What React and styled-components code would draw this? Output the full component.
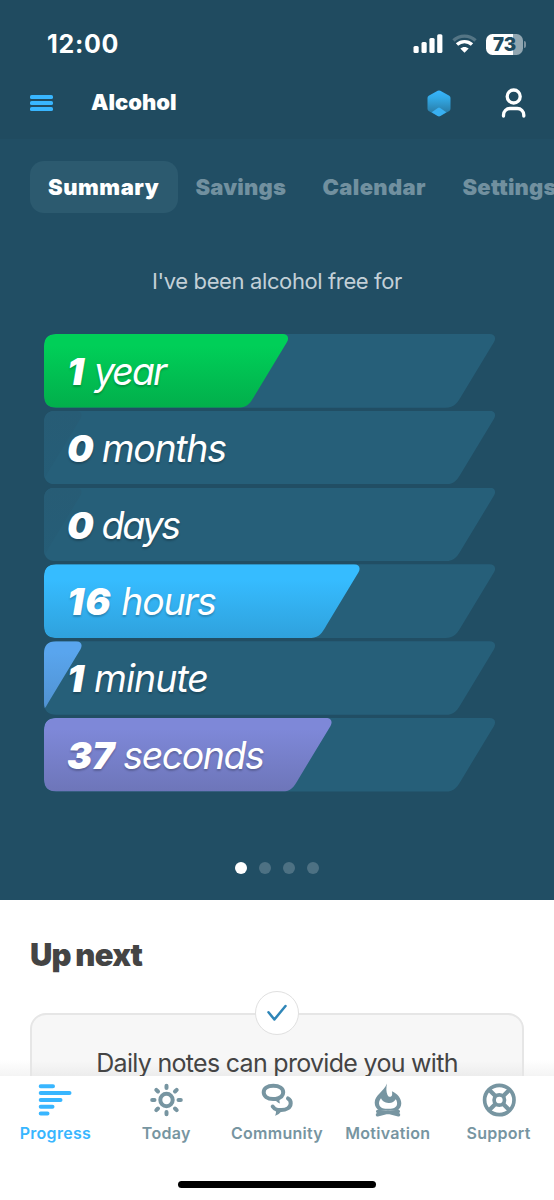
import React from "react";
import styled, { createGlobalStyle } from "styled-components";

const GlobalStyle = createGlobalStyle`
  * { box-sizing: border-box; }
  body {
    margin: 0;
    background: #fff;
    font-family: Inter, "Liberation Sans", sans-serif;
    overflow: hidden;
  }
  svg { display: block; flex: none; }
`;

const Screen = styled.div`
  width: 554px;
  height: 1200px;
  display: flex;
  flex-direction: column;
  overflow: hidden;
`;

const Header = styled.header`
  flex: none;
  height: 139px;
  background: #204b60;
  color: #fff;
`;

const StatusBar = styled.div`
  display: flex;
  align-items: center;
  height: 76px;
  padding: 12px 28px 0 47px;
`;

const Clock = styled.span`
  flex: 1;
  font-size: 25px;
  font-weight: 700;
  line-height: 30px;
  letter-spacing: 0.7px;
`;

const StatusIcons = styled.div`
  display: flex;
  align-items: center;
  gap: 9px;
`;

const Battery = styled.div`
  display: flex;
  align-items: center;
  gap: 1px;
`;

const BatteryBody = styled.span`
  width: 37px;
  height: 21px;
  border-radius: 6.5px;
  background: linear-gradient(90deg, #fff 73%, #91a6b1 73%);
  color: #204b60;
  font-size: 18.5px;
  font-weight: 900;
  line-height: 21px;
  text-align: center;
`;

const BatteryTip = styled.span`
  width: 2px;
  height: 7px;
  border-radius: 0 2px 2px 0;
  background: #7b929f;
`;

const NavBar = styled.div`
  display: flex;
  align-items: center;
  height: 54px;
  padding: 0 28px 0 30px;
`;

const MenuButton = styled.div`
  display: flex;
  flex-direction: column;
  gap: 2px;
  width: 61px;
`;

const MenuLine = styled.span`
  width: 23px;
  height: 4.3px;
  border-radius: 1.6px;
  background: #38b6ff;
`;

const Title = styled.h1`
  flex: 1;
  margin: 0;
  font-size: 22px;
  font-weight: 900;
  line-height: 26px;
  padding-bottom: 2px;
  letter-spacing: 0;
`;

const NavActions = styled.div`
  display: flex;
  align-items: center;
  gap: 50px;
`;

const Hero = styled.section`
  flex: none;
  height: 761px;
  background: #214e64;
  color: #fff;
  display: flex;
  flex-direction: column;
`;

const Tabs = styled.nav`
  display: flex;
  flex: none;
  height: 52px;
  margin: 22px 0 0 30px;
  overflow: hidden;
`;

const Tab = styled.span`
  flex: none;
  width: ${(p) => p.$width}px;
  padding-left: 18px;
  border-radius: 14px;
  background: ${(p) => (p.$active ? "#2c5a6f" : "transparent")};
  color: ${(p) => (p.$active ? "#fff" : "#71909f")};
  font-size: 22px;
  font-weight: 900;
  line-height: 52px;
  letter-spacing: ${(p) => p.$spacing}px;
  white-space: nowrap;
`;

const Caption = styled.p`
  margin: 54px 0 0;
  text-align: center;
  font-size: 22px;
  line-height: 28px;
  letter-spacing: -0.38px;
  color: #c3d0d7;
`;

const Bars = styled.div`
  display: flex;
  flex-direction: column;
  gap: 3.1px;
  margin: 39px 0 0 44px;
`;

const slantedShape = (w, left) =>
  `path("M${left + 12} 0 H${w - 6} C${w - 1} 0 ${w + 1} 3.5 ${w - 1.5} 8 L${w - 33.5} 61 C${w - 38} 69 ${w - 41} 73.7 ${w - 50} 73.7 H${left + 12} C${left + 4} 73.7 ${left} 69.7 ${left} 61.7 V12 C${left} 4 ${left + 4} 0 ${left + 12} 0 Z")`;

const BarTrack = styled.div`
  display: grid;
  width: 452px;
  height: 73.7px;
  background: #265f79;
  clip-path: ${slantedShape(451.5, 0)};
`;

const BarFill = styled.div`
  grid-area: 1 / 1;
  background: ${(p) => p.$fill};
  clip-path: ${(p) => slantedShape(p.$width, p.$width < 60 ? -60 : 0)};
`;

const BarLabel = styled.div`
  grid-area: 1 / 1;
  position: relative;
  padding-left: 23px;
  font-size: 37.5px;
  font-style: italic;
  font-weight: 400;
  line-height: 75px;
  letter-spacing: ${(p) => p.$spacing}px;
  white-space: nowrap;
  text-shadow: 0 2px 2px rgba(0, 0, 0, 0.22);
`;

const Amount = styled.b`
  font-weight: 900;
  letter-spacing: ${(p) => p.$spacing}px;
`;

const Pager = styled.div`
  display: flex;
  justify-content: center;
  gap: 11.7px;
  margin-top: 70px;
`;

const PagerDot = styled.span`
  width: 12px;
  height: 12px;
  border-radius: 50%;
  background: ${(p) => (p.$active ? "#fff" : "#4d7183")};
`;

const UpNext = styled.section`
  flex: none;
  height: 176px;
  padding: 36px 30px 0;
  overflow: hidden;
  background: linear-gradient(#fff 160px, #f4f4f4 176px);
`;

const SectionTitle = styled.h2`
  margin: 0;
  font-size: 31px;
  font-weight: 900;
  line-height: 38px;
  letter-spacing: -0.75px;
  word-spacing: -1px;
  color: #444;
`;

const Card = styled.div`
  display: flex;
  flex-direction: column;
  align-items: center;
  height: 160px;
  margin-top: 39px;
  border: 2px solid #e6e6e6;
  border-radius: 16px;
  background: linear-gradient(#f7f7f7 46px, #ececec 62px);
`;

const CheckBadge = styled.div`
  display: grid;
  place-items: center;
  flex: none;
  width: 44px;
  height: 44px;
  margin-top: -24px;
  border: 1.5px solid #e0e0e0;
  border-radius: 50%;
  background: #fff;
`;

const CardText = styled.p`
  margin: 12px 0 0;
  font-size: 25px;
  line-height: 32px;
  letter-spacing: -0.7px;
  white-space: nowrap;
  color: #444;
`;

const BottomNav = styled.nav`
  flex: none;
  height: 124px;
  background: #fff;
  display: flex;
  flex-direction: column;
  align-items: center;
  justify-content: space-between;
`;

const BottomItems = styled.div`
  display: grid;
  grid-template-columns: repeat(5, 110.8px);
`;

const BottomItem = styled.div`
  display: flex;
  flex-direction: column;
  align-items: center;
  padding-top: 7px;
  color: ${(p) => (p.$active ? "#38b6ff" : "#7795a1")};
`;

const BottomLabel = styled.span`
  margin-top: 5px;
  font-size: 16px;
  font-weight: 600;
  line-height: 23px;
  letter-spacing: 0.28px;
`;

const HomeIndicator = styled.div`
  width: 198px;
  height: 7px;
  margin-bottom: 12px;
  border-radius: 4px;
  background: #000;
`;

const SignalIcon = () => (
  <svg width="30" height="20" viewBox="0 0 30 20" fill="#fff">
    <rect x="0.5" y="12" width="5.2" height="7" rx="1.5" />
    <rect x="8.5" y="8" width="5.2" height="11" rx="1.5" />
    <rect x="16.4" y="4" width="5.2" height="15" rx="1.5" />
    <rect x="24.2" y="0.3" width="5.2" height="18.7" rx="1.5" />
  </svg>
);

const WifiIcon = () => (
  <svg width="25" height="20" viewBox="0 0 25 20" fill="none">
    <path d="M1.500 6.500C7.600.6 17.400.6 23.500 6.500" stroke="#547585" strokeWidth="3.400" />
    <path d="M5 10.600C9.300 6.600 15.700 6.600 20 10.600" stroke="#fff" strokeWidth="3.400" />
    <path d="M8.300 14.600C10.700 12.300 14.300 12.300 16.700 14.600L12.500 18.800Z" fill="#fff" />
  </svg>
);

const HexIcon = () => (
  <svg width="24" height="27" viewBox="0 0 24 27">
    <defs>
      <linearGradient id="hex" x1="0" y1="0" x2="0" y2="1">
        <stop offset="0" stopColor="#38b6ff" />
        <stop offset="0.3" stopColor="#32a9e6" />
        <stop offset="0.8" stopColor="#2a81ae" />
        <stop offset="1" stopColor="#2a81ae" />
      </linearGradient>
    </defs>
    <path d="M10.700.7a3 3 0 0 1 2.600 0l9 5a2.500 2.500 0 0 1 1.200 2.200v10.800a2.500 2.500 0 0 1-1.200 2.200l-9 5a3 3 0 0 1-2.600 0l-9-5A2.500 2.500 0 0 1 .5 18.700V7.900a2.500 2.500 0 0 1 1.200-2.200z" fill="url(#hex)" />
    <path d="M4.700 22.300 10.800 18a2.200 2.200 0 0 1 2.400 0l6.100 4.300-6 3.600a3 3 0 0 1-2.600 0z" fill="#38b0f2" />
  </svg>
);

const PersonIcon = () => (
  <svg width="25" height="30" viewBox="0 0 25 30" fill="none" stroke="#fff" strokeWidth="3.300">
    <circle cx="12.700" cy="8.500" r="6.500" />
    <path d="M2.500 28v-1a6.500 6.500 0 0 1 6.500-6.500h7.300a6.500 6.500 0 0 1 6.500 6.500v1" strokeLinecap="round" />
  </svg>
);

const CheckIcon = () => (
  <svg width="20" height="18" viewBox="0 0 20 18" fill="none" stroke="#2f86b8" strokeWidth="2.500" strokeLinecap="round" strokeLinejoin="round">
    <path d="M1.500 8.300 7.400 15.500 18.500 2" />
  </svg>
);

const ProgressIcon = () => (
  <svg width="34" height="34" viewBox="0 0 34 34" stroke="currentColor" strokeWidth="4" strokeLinecap="round">
    <path d="M2.700 3.200H15M2.700 10H31.500M2.700 17H22.500M2.700 23.700H14.500M2.700 30.500H9.500" />
  </svg>
);

const SunIcon = () => (
  <svg width="34" height="34" viewBox="0 0 34 34" fill="none" stroke="currentColor" strokeWidth="4" strokeLinecap="round">
    <circle cx="17.500" cy="17" r="6.200" />
    <path d="M17.500 2.700v2.300M17.500 29v2.300M3.200 17h2.300M29.500 17h2.300M7.300 6.800l1.700 1.700M26 25.500l1.700 1.700M7.300 27.200l1.700-1.700M26 8.500l1.700-1.700" />
  </svg>
);

const CommunityIcon = () => (
  <svg width="34" height="34" viewBox="0 0 34 34" fill="none" stroke="currentColor" strokeWidth="4">
    <path d="M13.300 2.700C7.200 2.700 3.700 5.500 3.700 9.300s3.600 6.700 9.400 6.700h2.600C21 15 23.200 12.600 23.200 9.300 23.200 5.500 19.500 2.700 13.300 2.700Z" />
    <path d="M14 15.500c1.500 2.300 3.500 4.300 6 5.100-.6-1.700-.7-4-.2-6.600Z" fill="currentColor" stroke="none" />
    <path d="M28 15.400C29.800 16.400 30.800 18 30.700 20.300 30.500 24.800 26 27.200 20.500 27H17.500C15.500 26.500 14 25.600 12.700 23.500" strokeLinecap="round" />
    <path d="M15.700 26c.6 2.400.4 4.800-.7 6.800 2.600-.7 5.300-2.500 6.500-5Z" fill="currentColor" stroke="none" />
  </svg>
);

const FireIcon = () => (
  <svg width="34" height="34" viewBox="0 0 34 34" fill="currentColor">
    <path fillRule="evenodd" d="M16 .5C15.200 4.500 15 8.500 16.500 12c1.200 2.600 4.200 2.400 4.600-.3.200-1.300.1-2.400-.2-3.500C26.500 10.500 30.300 15.500 30.300 20.300c0 3.200-1.600 5.600-3.700 7.200H8C5.500 25.800 3.700 23.200 3.700 19.800 3.700 12 12.500 9 16 .5ZM10 15.200C8.200 17.500 7.500 19.900 8.400 22.200c1.200 2.900 4.800 3.600 8.600 3.600s7.700-.7 8.800-3.600c.7-2 .2-4.300-1.100-6-1.400 2.600-4.200 4.200-7.300 3.800-3.700-.4-6.500-2.300-7.400-4.800Z" />
    <path d="M6.700 28.500 17 29.500 27.300 28.500M6.500 31.800 17 29l10.500 2.800" fill="none" stroke="currentColor" strokeWidth="3.500" strokeLinecap="round" />
  </svg>
);

const SupportIcon = () => (
  <svg width="34" height="34" viewBox="0 0 34 34" fill="none" stroke="currentColor" strokeWidth="3.700">
    <circle cx="17.300" cy="17" r="14.700" />
    <circle cx="17.300" cy="17" r="5.200" />
    <path d="M7.100 6.800l6.300 6.300M27.500 6.800l-6.300 6.300M7.100 27.200l6.300-6.300M27.500 27.200l-6.300-6.300" strokeWidth="4.200" />
  </svg>
);

const tabs = [
  { label: "Summary", width: 147.5, spacing: 0.55 },
  { label: "Savings", width: 127, spacing: 0.2 },
  { label: "Calendar", width: 140, spacing: 0.35 },
  { label: "Settings", width: 140, spacing: 0.2 },
];

const NONE = "linear-gradient(#275c75, #255d77)";
const bars = [
  { amount: 1, unit: "year", width: 244.5, amountSpacing: 1.5, unitSpacing: -2, fill: "linear-gradient(#00cf58 15%, #02ae4b)" },
  { amount: 0, unit: "months", width: 38, amountSpacing: -1.2, unitSpacing: -1.3, fill: NONE },
  { amount: 0, unit: "days", width: 38, amountSpacing: -0.6, unitSpacing: -2.2, fill: NONE },
  { amount: 16, unit: "hours", width: 316, amountSpacing: 1.4, unitSpacing: -1.3, fill: "linear-gradient(#36bcff 20%, #2fa1dc)" },
  { amount: 1, unit: "minute", width: 38, amountSpacing: 0.6, unitSpacing: -1, fill: "linear-gradient(#59a5ee 15%, #4f8fcd)" },
  { amount: 37, unit: "seconds", width: 288, amountSpacing: -0.1, unitSpacing: -1.45, fill: "linear-gradient(#7e88d8 15%, #6d75b8)" },
];

const sections = [
  { label: "Progress", Icon: ProgressIcon },
  { label: "Today", Icon: SunIcon },
  { label: "Community", Icon: CommunityIcon },
  { label: "Motivation", Icon: FireIcon },
  { label: "Support", Icon: SupportIcon },
];

export default function App() {
  return (
    <Screen>
      <GlobalStyle />
      <Header>
        <StatusBar>
          <Clock>12:00</Clock>
          <StatusIcons>
            <SignalIcon />
            <WifiIcon />
            <Battery>
              <BatteryBody>73</BatteryBody>
              <BatteryTip />
            </Battery>
          </StatusIcons>
        </StatusBar>
        <NavBar>
          <MenuButton>
            <MenuLine />
            <MenuLine />
            <MenuLine />
          </MenuButton>
          <Title>Alcohol</Title>
          <NavActions>
            <HexIcon />
            <PersonIcon />
          </NavActions>
        </NavBar>
      </Header>

      <Hero>
        <Tabs>
          {tabs.map((tab, i) => (
            <Tab key={tab.label} $active={i === 0} $width={tab.width} $spacing={tab.spacing}>
              {tab.label}
            </Tab>
          ))}
        </Tabs>
        <Caption>I've been alcohol free for</Caption>
        <Bars>
          {bars.map((bar) => (
            <BarTrack key={bar.unit}>
              <BarFill $width={bar.width} $fill={bar.fill} />
              <BarLabel $spacing={bar.unitSpacing}>
                <Amount $spacing={bar.amountSpacing}>{bar.amount}</Amount> {bar.unit}
              </BarLabel>
            </BarTrack>
          ))}
        </Bars>
        <Pager>
          {[0, 1, 2, 3].map((page) => (
            <PagerDot key={page} $active={page === 0} />
          ))}
        </Pager>
      </Hero>

      <UpNext>
        <SectionTitle>Up next</SectionTitle>
        <Card>
          <CheckBadge>
            <CheckIcon />
          </CheckBadge>
          <CardText>Daily notes can provide you with</CardText>
        </Card>
      </UpNext>

      <BottomNav>
        <BottomItems>
          {sections.map(({ label, Icon }, i) => (
            <BottomItem key={label} $active={i === 0}>
              <Icon />
              <BottomLabel>{label}</BottomLabel>
            </BottomItem>
          ))}
        </BottomItems>
        <HomeIndicator />
      </BottomNav>
    </Screen>
  );
}
